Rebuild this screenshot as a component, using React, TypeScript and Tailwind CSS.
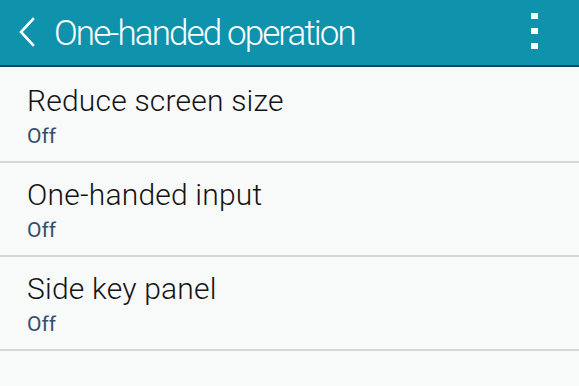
import { useState } from 'react';

const items = [
  { id: 1, title: 'Reduce screen size', value: 'Off' },
  { id: 2, title: 'One-handed input', value: 'Off' },
  { id: 3, title: 'Side key panel', value: 'Off' },
];

export default function App() {
  const [selected, setSelected] = useState<number | null>(null);

  return (
    <div className="w-[579px] h-[386px] overflow-hidden bg-[#f8f9f9] font-['Roboto',sans-serif]">
      <header className="h-[67px] bg-[#0f93ad] border-b-2 border-[#0d4a59] flex items-center">
        <button className="w-[54px] h-full flex items-center justify-center pb-[2px]">
          <svg width="18" height="30" viewBox="0 0 18 30" fill="none">
            <path d="M15 2 L3 15 L15 28" stroke="#ffffff" strokeWidth="2.6" strokeLinecap="square" />
          </svg>
        </button>
        <h1 className="flex-1 text-white text-[35px] font-light leading-none tracking-[-1.9px] pt-[1px]">
          One-handed operation
        </h1>
        <button className="w-[70px] h-full flex flex-col items-center justify-center gap-[9px] pr-[20px] pb-[3px]">
          <span className="block w-[7px] h-[6px] bg-white" />
          <span className="block w-[7px] h-[6px] bg-white" />
          <span className="block w-[7px] h-[6px] bg-white" />
        </button>
      </header>

      <ul>
        {items.map((item) => (
          <li
            key={item.id}
            onClick={() => setSelected(item.id)}
            className={`h-[94px] first:h-[96px] px-[27px] pt-[14px] first:pt-[16px] border-b-2 border-[#d3d8da] ${
              selected === item.id ? 'bg-[#eef0f1]' : ''
            }`}
          >
            <div className="text-[#141414] text-[30px] font-light leading-[36px] tracking-[0.2px]">
              {item.title}
            </div>
            <div className="text-[#34506a] text-[21px] leading-[26px] mt-[4px]">{item.value}</div>
          </li>
        ))}
      </ul>
    </div>
  );
}
